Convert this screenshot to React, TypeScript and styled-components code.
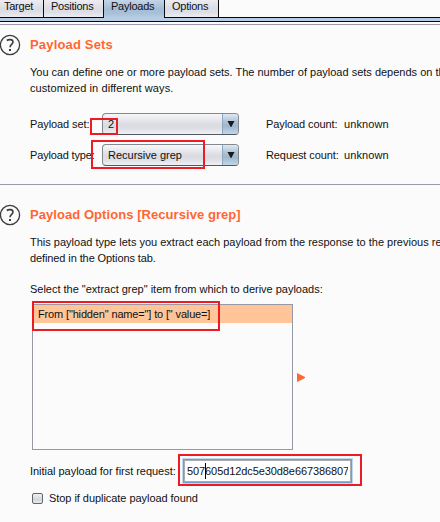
import React from "react";
import styled, { createGlobalStyle } from "styled-components";

const GlobalStyle = createGlobalStyle`
  * { box-sizing: border-box; }
  body { margin: 0; background: #fbfbfb; overflow: hidden; }
`;

const Window = styled.main`
  position: relative;
  width: 440px;
  height: 522px;
  overflow: hidden;
  background: #fbfbfb;
  color: #111;
  font: 11px/16px "Liberation Sans", Arial, sans-serif;
  white-space: nowrap;
`;

const Text = styled.span<{ $track?: number }>`
  letter-spacing: ${(p) => p.$track ?? 0}px;
`;

const TabBar = styled.nav`
  display: flex;
  height: 18px;
  border-bottom: 1px solid #05050c;
`;

const Tab = styled.div<{ $width: number; $pad?: number; $active?: boolean }>`
  width: ${(p) => p.$width}px;
  height: ${(p) => (p.$active ? 18 : 17)}px;
  padding-left: ${(p) => p.$pad ?? 7}px;
  line-height: 13px;
  letter-spacing: -0.25px;
  border-right: 1px solid #0b0b14;
  background: ${(p) =>
    p.$active
      ? "linear-gradient(#c3d5e7 0%, #a5bdd4 50%, #a8c0d8 75%, #b9cfe5 100%)"
      : "linear-gradient(#ececf1 0%, #dcdde4 50%, #dddee5 70%, #ebecf2 100%)"};
`;

const TabStrip = styled.div`
  height: 4px;
  margin-bottom: 2px;
  background: #b8cce4;
  border-bottom: 1px solid #05050c;
`;

const Section = styled.section<{ $height: number; $top: number }>`
  display: grid;
  grid-template-columns: 30px 1fr;
  align-content: start;
  height: ${(p) => p.$height}px;
  padding-top: ${(p) => p.$top}px;
  border-top: 1px solid #9a9aac;
`;

const HelpSvg = styled.svg`
  display: block;
  margin-left: -1px;
`;

const Title = styled.h2<{ $track: number }>`
  margin: 0;
  height: 22px;
  color: #ff6633;
  font-size: 13px;
  line-height: 22px;
  font-weight: bold;
  letter-spacing: ${(p) => p.$track}px;
`;

const Body = styled.div`
  grid-column: 2;
`;

const Paragraph = styled.div<{ $top: number }>`
  display: flex;
  flex-direction: column;
  margin-top: ${(p) => p.$top}px;
`;

const Fields = styled.div`
  display: grid;
  grid-template-columns: 72px 138px 26px 78px 1fr;
  grid-auto-rows: 22px;
  row-gap: 9px;
  align-items: center;
  margin-top: 17px;
`;

const Combo = styled.div`
  display: flex;
  width: 137px;
  height: 22px;
  border: 1px solid #84898f;
  border-bottom-color: #53575f;
  border-radius: 4px;
  overflow: hidden;
  background: linear-gradient(#f7f7f9 0%, #e8e9ee 28%, #d9dbe1 55%, #dfe0e6 75%, #f0f1f6 100%);
`;

const ComboValue = styled.div`
  flex: 1;
  padding-left: 5px;
  line-height: 20px;
`;

const ComboButton = styled.div`
  display: flex;
  align-items: center;
  justify-content: center;
  width: 16px;
  border-left: 1px solid #8fa8bf;
  background: linear-gradient(#dfe8f2 0%, #b2c5d8 35%, #9fb6cd 60%, #c2d6ea 100%);
`;

const Count = styled.span`
  grid-column: 4;
`;

const ListRow = styled.div`
  display: flex;
  align-items: center;
  gap: 4px;
  margin: 7px 0 0 2px;
`;

const List = styled.div`
  width: 261px;
  height: 146px;
  border: 1px solid #9698a6;
`;

const ListItem = styled.div`
  height: 18px;
  padding-left: 5px;
  line-height: 18px;
  background: #ffc497;
`;

const InputRow = styled.div`
  display: flex;
  align-items: center;
  height: 26px;
  margin-top: 8px;
`;

const InputLabel = styled.label`
  width: 152px;
`;

const Input = styled.div`
  position: relative;
  width: 171px;
  height: 26px;
  padding: 3px 4px 0 3px;
  border: 1px solid #c3d8ed;
  box-shadow: inset 0 0 0 1px #6d9dcd, inset 0 0 0 2px #a8adb4;
  background: #fff;
  line-height: 18px;
`;

const Clip = styled.div`
  overflow: hidden;
  width: 161px;
  margin-left: 1px;
`;

const Caret = styled.i`
  position: absolute;
  left: 22px;
  top: 4px;
  width: 1px;
  height: 16px;
  background: #000;
`;

const CheckRow = styled.label`
  display: flex;
  align-items: center;
  gap: 6px;
  height: 16px;
  margin: 6px 0 0 2px;
`;

const Checkbox = styled.span`
  width: 11px;
  height: 11px;
  border: 1px solid #62666d;
  border-radius: 2px;
  background: linear-gradient(#f0f0f3, #d4d6dc 60%, #e8e9ee);
`;

const Highlight = styled.div<{ $x: number; $y: number; $w: number; $h: number }>`
  position: absolute;
  left: ${(p) => p.$x}px;
  top: ${(p) => p.$y}px;
  width: ${(p) => p.$w}px;
  height: ${(p) => p.$h}px;
  border: 2px solid #ed1c24;
`;

const Help = () => (
  <HelpSvg width="22" height="22" viewBox="0 0 22 22" fill="none" stroke="#3c3c3e">
    <circle cx="11" cy="11" r="9.6" strokeWidth="1.3" />
    <path d="M7.8 6.5C9.5 5.2 14 5 14 8C14 10.4 11 10.4 11 13.3" strokeWidth="1.6" />
    <path d="M11 15V17" strokeWidth="2" />
  </HelpSvg>
);

const Select = ({ value }: { value: string }) => (
  <Combo>
    <ComboValue><Text>{value}</Text></ComboValue>
    <ComboButton>
      <svg width="8" height="8" viewBox="0 0 8 8"><path d="M0.5 1H7.5L4.3 7H3.7Z" fill="#17191d" /></svg>
    </ComboButton>
  </Combo>
);

export default function App() {
  return (
    <Window>
      <GlobalStyle />
      <TabBar>
        <Tab $width={44} $pad={4}>Target</Tab>
        <Tab $width={60}>Positions</Tab>
        <Tab $width={61} $active>Payloads</Tab>
        <Tab $width={54}>Options</Tab>
      </TabBar>
      <TabStrip />
      <Section $height={160} $top={9}>
        <Help />
        <Title $track={0.17}>Payload Sets</Title>
        <Body>
          <Paragraph $top={8}>
            <Text>You can define one or more payload sets. The number of payload sets depends on the attack type</Text>
            <Text $track={0.08}>customized in different ways.</Text>
          </Paragraph>
          <Fields>
            <Text $track={-0.1}>Payload set:</Text>
            <Select value="2" />
            <Count><Text $track={-0.1}>Payload count:</Text></Count>
            <Text $track={0.1}>unknown</Text>
            <Text $track={-0.15}>Payload type:</Text>
            <Select value="Recursive grep" />
            <Count><Text $track={-0.1}>Request count:</Text></Count>
            <Text $track={0.1}>unknown</Text>
          </Fields>
        </Body>
      </Section>
      <Section $height={338} $top={19}>
        <Help />
        <Title $track={0.06}>Payload Options [Recursive grep]</Title>
        <Body>
          <Paragraph $top={8}>
            <Text>This payload type lets you extract each payload from the response to the previous request</Text>
            <Text $track={-0.1}>defined in the Options tab.</Text>
          </Paragraph>
          <Paragraph $top={15}>
            <Text $track={-0.01}>Select the "extract grep" item from which to derive payloads:</Text>
          </Paragraph>
          <ListRow>
            <List><ListItem><Text $track={-0.15}>From ["hidden" name="] to [" value=]</Text></ListItem></List>
            <svg width="9" height="9" viewBox="0 0 9 9"><path d="M0 0L8 4V5L0 9Z" fill="#ff6633" /></svg>
          </ListRow>
          <InputRow>
            <InputLabel><Text $track={-0.03}>Initial payload for first request:</Text></InputLabel>
            <Input><Clip><Text $track={-0.09}>507605d12dc5e30d8e667386807</Text></Clip><Caret /></Input>
          </InputRow>
          <CheckRow><Checkbox /><Text $track={-0.05}>Stop if duplicate payload found</Text></CheckRow>
        </Body>
      </Section>
      <Highlight $x={90} $y={118} $w={28} $h={17} />
      <Highlight $x={91} $y={140} $w={114} $h={29} />
      <Highlight $x={32} $y={301} $w={188} $h={30} />
      <Highlight $x={178} $y={454} $w={184} $h={32} />
    </Window>
  );
}
